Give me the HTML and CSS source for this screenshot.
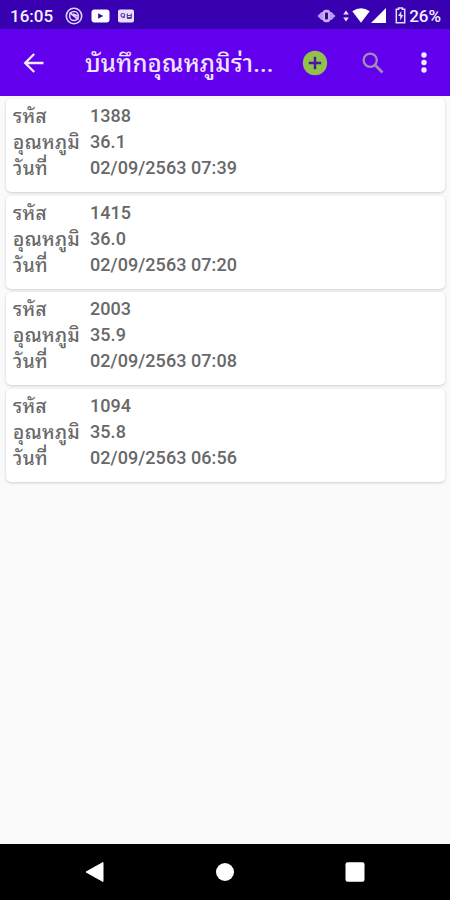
FILE: index.html
```html
<!DOCTYPE html>
<html lang="th">
    <head>
        <meta charset="UTF-8" />
        <meta name="viewport" content="width=device-width, initial-scale=1.0" />
        <title>บันทึกอุณหภูมิร่างกาย</title>
        <link rel="stylesheet" href="styles.css">
    </head>
    <body>
        <div class="status-bar">
            <span class="clock">16:05</span>
            <div class="notifications">
                <svg width="18" height="18" viewBox="0 0 18 18" fill="none" stroke="#e0d3fb">
                    <circle cx="9" cy="9" r="7.7" stroke-width="1.6" />
                    <circle cx="9" cy="9" r="4.4" stroke-width="1.5" />
                    <path d="M4.5 5.5l9 7M8 7l5 2" stroke-width="1.7" />
                </svg>
                <svg width="19" height="14" viewBox="0 0 19 14">
                    <rect x="0.5" y="0.5" width="18" height="13" rx="3" fill="#fff" />
                    <path d="M7.2 4.2v5.6l5-2.8z" fill="#3a00a8" />
                </svg>
                <svg width="16" height="14" viewBox="0 0 16 14">
                    <rect x="0" y="0.5" width="16" height="13" rx="2" fill="#e9defc" />
                    <g fill="none" stroke="#5b36ad" stroke-width="1.2">
                        <circle cx="4.8" cy="6.3" r="1.8" />
                        <path d="M5 8.8l2-1M9.3 4.5v4h4v-4M9.5 6.5h3.5M9 9.5h4.5" />
                    </g>
                </svg>
            </div>
            <div class="system">
                <svg class="vibrate" width="19" height="16" viewBox="0 0 19 16">
                    <path d="M0.5 8l4-4h2v8h-2zM18.5 8l-4-4h-2v8h2z" fill="#b69bea" />
                    <rect x="5.8" y="1.8" width="7.4" height="12.4" rx="3" fill="#c5afef" />
                    <rect x="8" y="4.5" width="3" height="7" rx="1" fill="#3a00a8" />
                </svg>
                <svg class="traffic" width="6" height="12" viewBox="0 0 6 12">
                    <path d="M3 0.5l2.8 4H0.2zM3 11.5l2.8-4H0.2z" fill="#e9e2fa" />
                </svg>
                <svg class="wifi" width="18" height="15" viewBox="0 0 18 15">
                    <path d="M0.3 3.2Q9-2.6 17.7 3.2L9 14.8z" fill="#fff" />
                </svg>
                <svg class="signal" width="15" height="15" viewBox="0 0 15 15">
                    <path d="M15 0v15H0z" fill="#fff" />
                </svg>
                <svg class="battery" width="11" height="17" viewBox="0 0 11 17">
                    <path d="M3.6 2.3V1h3.8v1.3h2.3v13.4H1.3V2.3z" fill="none" stroke="#e5dcf8" stroke-width="1.5" />
                    <path d="M6.3 4L3 9h2.2v4.5L8.3 8H6.3z" fill="#e5dcf8" />
                </svg>
                <span>26%</span>
            </div>
        </div>
        <header class="toolbar">
            <svg class="back" width="22" height="22" viewBox="0 0 22 22" fill="none" stroke="#f2eaff" stroke-width="2.3">
                <path d="M20.5 11H2.6M11.2 2L2.2 11l9 9" />
            </svg>
            <h1>บันทึกอุณหภูมิร่า...</h1>
            <svg class="add" width="26" height="26" viewBox="0 0 26 26">
                <circle cx="13" cy="13" r="12.2" fill="#91c14b" />
                <path d="M13 6.8v12.4M6.8 13h12.4" stroke="#4a169f" stroke-width="2.4" />
            </svg>
            <svg class="search" width="22" height="22" viewBox="0 0 22 22" fill="none" stroke="#a08fb4">
                <circle cx="8.2" cy="8.2" r="6.6" stroke-width="2.3" />
                <path d="M13 13l7.5 7.5" stroke-width="2.7" />
            </svg>
            <svg class="more" width="6" height="21" viewBox="0 0 6 21" fill="#f2eaff">
                <circle cx="3" cy="3" r="2.7" />
                <circle cx="3" cy="10.5" r="2.7" />
                <circle cx="3" cy="18" r="2.7" />
            </svg>
        </header>
        <main>
            <dl class="card">
                <dt>รหัส</dt><dd>1388</dd>
                <dt>อุณหภูมิ</dt><dd>36.1</dd>
                <dt>วันที่</dt><dd>02/09/2563 07:39</dd>
            </dl>
            <dl class="card">
                <dt>รหัส</dt><dd>1415</dd>
                <dt>อุณหภูมิ</dt><dd>36.0</dd>
                <dt>วันที่</dt><dd>02/09/2563 07:20</dd>
            </dl>
            <dl class="card">
                <dt>รหัส</dt><dd>2003</dd>
                <dt>อุณหภูมิ</dt><dd>35.9</dd>
                <dt>วันที่</dt><dd>02/09/2563 07:08</dd>
            </dl>
            <dl class="card">
                <dt>รหัส</dt><dd>1094</dd>
                <dt>อุณหภูมิ</dt><dd>35.8</dd>
                <dt>วันที่</dt><dd>02/09/2563 06:56</dd>
            </dl>
        </main>
        <nav class="nav-bar">
            <svg width="20" height="22" viewBox="0 0 20 22" fill="#fff">
                <path d="M18 1.5v19L1 11z" stroke="#fff" stroke-linejoin="round" />
            </svg>
            <svg width="20" height="20" viewBox="0 0 20 20" fill="#fff">
                <circle cx="10" cy="10" r="9" />
            </svg>
            <svg width="20" height="20" viewBox="0 0 20 20" fill="#fff">
                <rect x="0.5" y="0.3" width="19" height="19.4" rx="2" />
            </svg>
        </nav>
    </body>
</html>
```

FILE: styles.css
```css
* {
    box-sizing: border-box;
}
body {
    margin: 0;
    height: 900px;
    display: flex;
    flex-direction: column;
    overflow: hidden;
    background-color: #fafafa;
    font-family: Roboto, "Noto Sans Thai Looped", "Noto Looped Thai", "Droid Sans Thai", Loma, Garuda, "Noto Serif Thai", "Noto Sans", sans-serif;
}
svg {
    display: block;
    flex: none;
}
.status-bar {
    flex: none;
    height: 29px;
    padding: 2px 9px 0 10px;
    display: flex;
    align-items: center;
    background-color: #3900b1;
    color: #f4efff;
    font-size: 17px;
    font-weight: 500;
}
.clock {
    width: 55px;
}
.notifications {
    display: flex;
    align-items: center;
    gap: 8px;
}
.system {
    margin-left: auto;
    display: flex;
    align-items: center;
}
.traffic {
    margin-left: 7px;
}
.wifi {
    margin-left: 3px;
}
.signal {
    margin-left: 1px;
}
.battery {
    margin: 0 3px 0 9px;
}
.toolbar {
    flex: none;
    height: 67px;
    padding: 0 23px;
    display: flex;
    align-items: center;
    background-color: #6200ee;
}
.toolbar h1 {
    width: 218px;
    margin: 2px 0 0 40px;
    color: #eee4ff;
    font-size: 24px;
    font-weight: 500;
    line-height: 40px;
    letter-spacing: 0.2px;
    white-space: nowrap;
}
.search {
    margin-left: 34px;
}
.more {
    margin-left: 37px;
}
main {
    flex: 1;
    padding: 3px 5px 0 6px;
}
.card {
    height: 93px;
    margin: 0 0 3.5px;
    padding: 4px 7px;
    display: grid;
    grid-template-columns: 77px 1fr;
    grid-auto-rows: 26px;
    align-content: start;
    border-radius: 5px;
    background-color: #fff;
    box-shadow: 0 1px 3px rgba(0, 0, 0, 0.18);
    color: #686868;
    font-size: 18px;
    line-height: 26px;
    white-space: nowrap;
}
.card dt,
.card dd {
    margin: 0;
}
.card dt {
    padding-top: 1px;
    font-size: 19px;
    font-weight: 500;
    letter-spacing: 0.4px;
}
.card dd {
    font-weight: 500;
    letter-spacing: 0.06px;
}
.nav-bar {
    flex: none;
    height: 56px;
    padding: 0 85px;
    display: flex;
    align-items: center;
    justify-content: space-between;
    background-color: #000;
}
```
